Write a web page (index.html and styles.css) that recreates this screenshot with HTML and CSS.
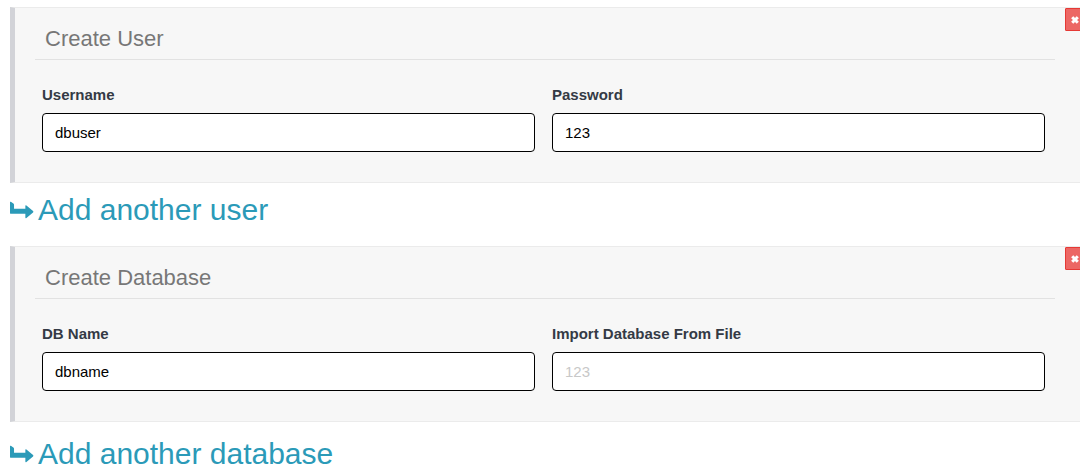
FILE: index.html
```html
<!DOCTYPE html>
<html lang="en">
<head>
<meta charset="utf-8">
<title>Create User and Database</title>
<link rel="stylesheet" href="styles.css">
</head>
<body>
<main class="page">
  <section class="panel">
    <button class="remove" type="button" aria-label="Remove user"><svg class="remove-icon" viewBox="0 0 8 8"><path d="M1.2 1.2 6.8 6.8M6.8 1.2 1.2 6.8"/></svg></button>
    <h2 class="panel-title">Create User</h2>
    <div class="fields">
      <div class="field">
        <label class="label" for="username">Username</label>
        <input class="input" id="username" type="text" value="dbuser">
      </div>
      <div class="field">
        <label class="label" for="password">Password</label>
        <input class="input" id="password" type="text" value="123">
      </div>
    </div>
  </section>
  <div class="add-row">
    <a class="add" href="#"><svg class="add-icon" viewBox="0 0 25 18"><path d="M0 .8Q0 0 .9 .5L3.5 2.3Q4.2 2.8 4.2 3.7V7.8H16V4.9Q16 3.6 17.1 4.4L24 10Q24.8 10.9 24 11.7L17.1 17.4Q16 18.1 16 16.8V13H1Q0 13 0 12Z"/></svg>Add another user</a>
  </div>
  <section class="panel">
    <button class="remove" type="button" aria-label="Remove database"><svg class="remove-icon" viewBox="0 0 8 8"><path d="M1.2 1.2 6.8 6.8M6.8 1.2 1.2 6.8"/></svg></button>
    <h2 class="panel-title">Create Database</h2>
    <div class="fields">
      <div class="field">
        <label class="label" for="dbname">DB Name</label>
        <input class="input" id="dbname" type="text" value="dbname">
      </div>
      <div class="field">
        <label class="label" for="dbfile">Import Database From File</label>
        <input class="input" id="dbfile" type="text" placeholder="123">
      </div>
    </div>
  </section>
  <div class="add-row add-row-last">
    <a class="add" href="#"><svg class="add-icon" viewBox="0 0 25 18"><path d="M0 .8Q0 0 .9 .5L3.5 2.3Q4.2 2.8 4.2 3.7V7.8H16V4.9Q16 3.6 17.1 4.4L24 10Q24.8 10.9 24 11.7L17.1 17.4Q16 18.1 16 16.8V13H1Q0 13 0 12Z"/></svg>Add another database</a>
  </div>
</main>
</body>
</html>
```
FILE: styles.css
```css
* {
  box-sizing: border-box;
}

body {
  margin: 0;
  background: #fff;
  color: #343a45;
  font-family: "Liberation Sans", Arial, sans-serif;
  font-size: 15px;
  line-height: 20px;
}

.page {
  padding: 7px 0 0 10px;
  overflow: hidden;
}

.panel {
  position: relative;
  padding: 10px 25px 30px 20px;
  border: 1px solid #ebebeb;
  border-left: 5px solid #d2d3d8;
  border-right: 0;
  background: #f7f7f7;
}

.remove {
  position: absolute;
  top: 0;
  right: -5px;
  display: flex;
  align-items: center;
  justify-content: center;
  width: 20px;
  height: 23px;
  padding: 0;
  border: 1px solid #e53935;
  border-radius: 1px;
  background: #ec6764;
}

.remove-icon {
  width: 8px;
  height: 8px;
  fill: none;
  stroke: #fff;
  stroke-width: 3;
}

.panel-title {
  margin: 0;
  padding: 6px 10px;
  border-bottom: 1px solid #e2e2e2;
  color: #777;
  font-size: 22px;
  font-weight: 400;
  line-height: 29px;
}

.fields {
  display: grid;
  grid-template-columns: 1fr 1fr;
  gap: 17px;
  padding: 25px 10px 0 7px;
}

.field {
  display: flex;
  flex-direction: column;
  gap: 8px;
}

.label {
  font-weight: 700;
}

.input {
  width: 100%;
  height: 39px;
  padding: 0 12px;
  border: 1px solid #000;
  border-radius: 4px;
  background: #fff;
  color: #000;
  font: inherit;
}

.input::placeholder {
  color: #c8c8c8;
}

.add-row {
  display: flex;
  padding: 9px 0 18px;
}

.add-row-last {
  padding: 14px 0 0;
}

.add {
  display: flex;
  align-items: center;
  gap: 4px;
  color: #2b9ab8;
  font-size: 30px;
  line-height: 36px;
  text-decoration: none;
}

.add-icon {
  width: 24px;
  height: 18px;
  fill: #2b9ab8;
}
```
